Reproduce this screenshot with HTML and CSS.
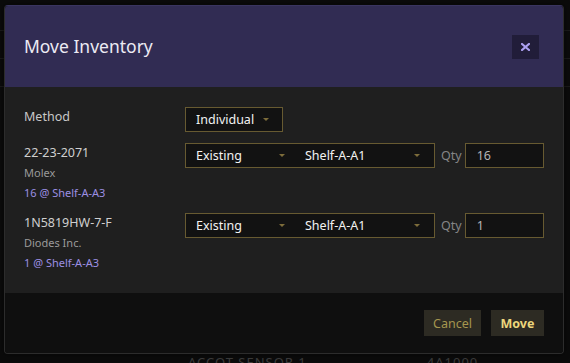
FILE: index.html
```html
<!DOCTYPE html>
<html lang="en">
<head>
    <meta charset="UTF-8">
    <meta name="viewport" content="width=device-width, initial-scale=1.0">
    <title>Move Inventory</title>
    <link rel="stylesheet" href="styles.css">
</head>
<body>
    <!-- page content behind the dialog -->
    <div class="page">
        <div class="page-row"></div>
        <div class="page-row"></div>
        <div class="page-row"></div>
        <div class="page-row page-row-text">
            <span class="col-a">ACCOT SENSOR 1</span>
            <span class="col-b">4A1000</span>
        </div>
    </div>

    <div class="modal">
        <div class="modal-header">
            <h2 class="modal-title">Move Inventory</h2>
            <button class="close-btn" type="button">
                <svg width="9" height="8" viewBox="0 0 9 8">
                    <path d="M1 1 L8 7 M8 1 L1 7" stroke="#ab9ff0" stroke-width="2.2" stroke-linecap="square"/>
                </svg>
            </button>
        </div>

        <div class="modal-body">
            <div class="row row-method">
                <div class="row-label">Method</div>
                <div class="controls">
                    <div class="select select-method">
                        <span>Individual</span><i class="caret"></i>
                    </div>
                </div>
            </div>

            <div class="row">
                <div class="part">
                    <div class="part-number">22-23-2071</div>
                    <div class="part-mfr">Molex</div>
                    <div class="part-stock">16 @ Shelf-A-A3</div>
                </div>
                <div class="controls">
                    <div class="select-group">
                        <div class="seg seg-type"><span>Existing</span><i class="caret"></i></div>
                        <div class="seg seg-loc"><span>Shelf-A-A1</span><i class="caret"></i></div>
                    </div>
                    <label class="qty-label">Qty</label>
                    <input class="qty-input" type="text" value="16">
                </div>
            </div>

            <div class="row">
                <div class="part">
                    <div class="part-number">1N5819HW-7-F</div>
                    <div class="part-mfr">Diodes Inc.</div>
                    <div class="part-stock">1 @ Shelf-A-A3</div>
                </div>
                <div class="controls">
                    <div class="select-group">
                        <div class="seg seg-type"><span>Existing</span><i class="caret"></i></div>
                        <div class="seg seg-loc"><span>Shelf-A-A1</span><i class="caret"></i></div>
                    </div>
                    <label class="qty-label">Qty</label>
                    <input class="qty-input" type="text" value="1">
                </div>
            </div>
        </div>

        <div class="modal-footer">
            <button class="btn btn-cancel" type="button">Cancel</button>
            <button class="btn btn-move" type="button">Move</button>
        </div>
    </div>
</body>
</html>
```

FILE: styles.css
```css
/* Page behind the dialog */
body {
    margin: 0;
    background-color: #0b0b0b;
    font-family: "Noto Sans", "Open Sans", sans-serif;
    color: #e6e6e6;
    height: 363px;
    overflow: hidden;
}

.page {
    padding-top: 3px;
}

.page-row {
    height: 27px;
    border-bottom: 1px solid #1b1b1b;
}

.page-row-text {
    height: 284px;
    border-bottom: none;
    display: flex;
    align-items: flex-end;
    font-size: 13px;
    line-height: 18px;
    color: #3c3c3c;
    letter-spacing: 1px;
}

.col-a {
    margin-left: 188px;
}

.col-b {
    margin-left: 120px;
}

/* Dialog */
.modal {
    position: absolute;
    left: 4px;
    top: 5px;
    width: 558px;
    border: 1px solid #2c2c2c;
    border-top-color: #3a3560;
    border-radius: 4px;
    overflow: hidden;
    box-shadow: 0 0 6px rgba(0, 0, 0, 0.6);
}

.modal-header {
    height: 81px;
    background-color: #312c53;
    display: flex;
    align-items: center;
    justify-content: space-between;
    padding: 0 24px 0 19px;
    box-sizing: border-box;
}

.modal-title {
    margin: 0;
    font-size: 17.5px;
    font-weight: normal;
    color: #ecebf3;
    padding-bottom: 1px;
}

.close-btn {
    width: 27px;
    height: 24px;
    border: none;
    padding: 0;
    background-color: #211d39;
    display: flex;
    align-items: center;
    justify-content: center;
    cursor: pointer;
}

.modal-body {
    background-color: #1f1f1f;
    padding: 20px 19px 20px;
    display: flex;
    flex-direction: column;
    gap: 10px;
}

.row {
    display: grid;
    grid-template-columns: 161px 1fr;
    align-items: start;
}

.row-method {
    margin-bottom: 1px;
}

.row-label {
    font-size: 12.5px;
    line-height: 20px;
    color: #c8c8c8;
}

.part {
    line-height: 20px;
}

.part-number {
    font-size: 12.5px;
    color: #cfcfcf;
}

.part-mfr {
    font-size: 11px;
    color: #9a9a9a;
}

.part-stock {
    font-size: 11px;
    color: #9c8fe3;
}

.controls {
    display: flex;
    align-items: center;
}

/* Selects */
.select,
.select-group {
    height: 25px;
    box-sizing: border-box;
    border: 1px solid #675a31;
    background-color: #121212;
    font-size: 12.5px;
    color: #f2f2f2;
    display: flex;
    align-items: center;
}

.select-method {
    width: 98px;
    padding: 0 13px 0 10px;
}

.select-group {
    width: 250px;
}

.seg {
    display: flex;
    align-items: center;
    height: 100%;
    box-sizing: border-box;
}

.seg-type {
    width: 108px;
    padding: 0 9px 0 10px;
}

.seg-loc {
    flex: 1;
    padding: 0 14px 0 11px;
}

.caret {
    margin-left: auto;
    width: 0;
    height: 0;
    border-left: 3px solid transparent;
    border-right: 3px solid transparent;
    border-top: 3px solid #7d6c3a;
}

.qty-label {
    font-size: 12.5px;
    color: #858585;
    margin: 0 3px 0 6px;
}

.qty-input {
    width: 79px;
    height: 25px;
    box-sizing: border-box;
    border: 1px solid #675a31;
    background-color: #121212;
    color: #b4b4b4;
    font-family: inherit;
    font-size: 12.5px;
    padding: 0 0 0 11px;
    outline: none;
}

/* Footer */
.modal-footer {
    height: 60px;
    background-color: #0f0f0f;
    display: flex;
    align-items: center;
    justify-content: flex-end;
    gap: 10px;
    padding: 0 19px;
}

.btn {
    height: 26px;
    border: none;
    background-color: #2d2b23;
    font-family: inherit;
    font-size: 12.5px;
    cursor: pointer;
}

.btn-cancel {
    width: 57px;
    color: #a5964f;
}

.btn-move {
    width: 53px;
    color: #ecd67c;
    font-weight: bold;
}
```
